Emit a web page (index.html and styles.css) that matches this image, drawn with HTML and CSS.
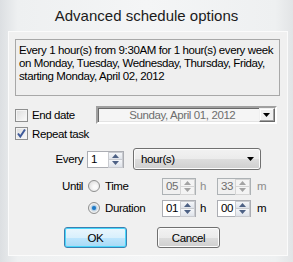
FILE: index.html
```html
<!DOCTYPE html>
<html lang="en">
<head>
    <meta charset="UTF-8">
    <title>Advanced schedule options</title>
    <link rel="stylesheet" href="styles.css">
</head>
<body>
    <div class="window">
        <h1 class="title">Advanced schedule options</h1>

        <div class="panel">
            <div class="summary">
                Every 1 hour(s) from 9:30AM for 1 hour(s) every week<br>
                on Monday, Tuesday, Wednesday, Thursday, Friday,<br>
                starting Monday, April 02, 2012
            </div>

            <!-- End date -->
            <div class="row row-end">
                <span class="check"></span>
                <span class="check-label">End date</span>
                <div class="datebox">
                    <span class="date-text">Sunday, April 01, 2012</span>
                    <span class="date-btn">
                        <svg width="7" height="4" viewBox="0 0 7 4"><path d="M0 0h7L3.5 4z" fill="#000"/></svg>
                    </span>
                </div>
            </div>

            <!-- Repeat task -->
            <div class="row row-repeat">
                <span class="check checked">
                    <svg width="11" height="11" viewBox="0 0 11 11"><path d="M2 5.5l2.3 3L9 1.5" fill="none" stroke="#3e5a9a" stroke-width="2"/></svg>
                </span>
                <span class="check-label">Repeat task</span>
            </div>

            <div class="row row-every">
                <span class="field-label">Every</span>
                <div class="spin spin-every">
                    <span class="spin-val">1</span>
                    <span class="spin-btns">
                        <span class="spin-btn"><svg width="7" height="4" viewBox="0 0 7 4"><path d="M3.5 0L7 4H0z"/></svg></span>
                        <span class="spin-btn"><svg width="7" height="4" viewBox="0 0 7 4"><path d="M0 0h7L3.5 4z"/></svg></span>
                    </span>
                </div>
                <div class="combo">
                    <span>hour(s)</span>
                    <svg width="7" height="4" viewBox="0 0 7 4"><path d="M0 0h7L3.5 4z" fill="#000"/></svg>
                </div>
            </div>

            <div class="row row-until">
                <span class="field-label">Until</span>
                <span class="radio"></span>
                <span class="radio-label">Time</span>
                <div class="spin spin-small disabled">
                    <span class="spin-val">05</span>
                    <span class="spin-btns">
                        <span class="spin-btn"><svg width="7" height="4" viewBox="0 0 7 4"><path d="M3.5 0L7 4H0z"/></svg></span>
                        <span class="spin-btn"><svg width="7" height="4" viewBox="0 0 7 4"><path d="M0 0h7L3.5 4z"/></svg></span>
                    </span>
                </div>
                <span class="unit disabled-text">h</span>
                <div class="spin spin-small disabled">
                    <span class="spin-val">33</span>
                    <span class="spin-btns">
                        <span class="spin-btn"><svg width="7" height="4" viewBox="0 0 7 4"><path d="M3.5 0L7 4H0z"/></svg></span>
                        <span class="spin-btn"><svg width="7" height="4" viewBox="0 0 7 4"><path d="M0 0h7L3.5 4z"/></svg></span>
                    </span>
                </div>
                <span class="unit unit-m disabled-text">m</span>
            </div>

            <div class="row row-duration">
                <span class="field-label"></span>
                <span class="radio selected"></span>
                <span class="radio-label">Duration</span>
                <div class="spin spin-small">
                    <span class="spin-val">01</span>
                    <span class="spin-btns">
                        <span class="spin-btn"><svg width="7" height="4" viewBox="0 0 7 4"><path d="M3.5 0L7 4H0z"/></svg></span>
                        <span class="spin-btn"><svg width="7" height="4" viewBox="0 0 7 4"><path d="M0 0h7L3.5 4z"/></svg></span>
                    </span>
                </div>
                <span class="unit">h</span>
                <div class="spin spin-small">
                    <span class="spin-val">00</span>
                    <span class="spin-btns">
                        <span class="spin-btn"><svg width="7" height="4" viewBox="0 0 7 4"><path d="M3.5 0L7 4H0z"/></svg></span>
                        <span class="spin-btn"><svg width="7" height="4" viewBox="0 0 7 4"><path d="M0 0h7L3.5 4z"/></svg></span>
                    </span>
                </div>
                <span class="unit unit-m">m</span>
            </div>

            <div class="buttons">
                <button class="btn btn-default">OK</button>
                <button class="btn">Cancel</button>
            </div>
        </div>
    </div>
</body>
</html>
```

FILE: styles.css
```css
body {
    margin: 0;
    width: 293px;
    height: 262px;
    overflow: hidden;
    background: linear-gradient(90deg, #dcdfe2 0%, #eef0f1 6%, #f4f5f6 50%, #eef0f1 94%, #e2e4e6 100%);
    font-family: "Liberation Sans", Arial, sans-serif;
    font-size: 11.5px;
    letter-spacing: -0.4px;
    color: #000;
}

.window {
    padding-top: 1px;
}

.title {
    margin: 0;
    height: 30px;
    line-height: 30px;
    text-align: center;
    font-size: 15px;
    font-weight: normal;
    letter-spacing: 0;
    color: #1b1b1b;
}

/* Zone client de la fenetre */
.panel {
    margin-left: 8px;
    width: 278px;
    height: 215px;
    padding-bottom: 8px;
    border: 1px solid #fbfbfb;
    background: #f0f0f0;
}

.summary {
    margin: 7px 0 0 6px;
    width: 258px;
    height: 48px;
    padding: 4px 2px 3px 3px;
    border: 1px solid #a8a8a8;
    background: #efefef;
    line-height: 13px;
    white-space: nowrap;
}

.row {
    display: flex;
    align-items: center;
}

/* Cases a cocher */
.row-end {
    margin-top: 10px;
    height: 18px;
}

.row-repeat {
    margin-top: 3px;
    height: 13px;
}

.check {
    display: flex;
    align-items: center;
    justify-content: center;
    box-sizing: border-box;
    width: 13px;
    height: 13px;
    margin-left: 6px;
    border: 1px solid #8e8f8f;
    background: linear-gradient(135deg, #dcdcdc, #fbfbfb);
    box-shadow: inset 0 0 0 1px #f4f4f4;
}

.check-label {
    margin-left: 4px;
}

.datebox {
    display: flex;
    align-items: center;
    box-sizing: border-box;
    width: 181px;
    height: 18px;
    margin-left: 21px;
    border-style: solid;
    border-width: 2px;
    border-color: #a0a0a0 #fff #fff #a0a0a0;
    box-shadow: inset 1px 1px 0 #696969, inset -1px -1px 0 #e3e3e3;
    background: #f5f5f5;
}

.date-text {
    flex: 1;
    text-align: center;
    color: #6d6d6d;
    padding-left: 8px;
}

.date-btn {
    display: flex;
    align-items: center;
    justify-content: center;
    box-sizing: border-box;
    width: 16px;
    height: 14px;
    border-style: solid;
    border-width: 1px;
    border-color: #f0f0f0 #696969 #696969 #f0f0f0;
    background: #f0f0f0;
    box-shadow: inset -1px -1px 0 #a0a0a0, inset 1px 1px 0 #fff;
}

/* Zone de repetition */
.field-label {
    width: 74px;
    text-align: right;
}

.row-every {
    margin-top: 8px;
    height: 22px;
}

.row-until {
    margin-top: 8px;
    height: 16px;
}

.row-duration {
    margin-top: 6px;
    height: 16px;
}

.spin {
    display: flex;
    box-sizing: border-box;
    height: 17px;
    border: 1px solid #abadb3;
    background: #fff;
}

.spin-every {
    width: 37px;
    margin-left: 4px;
}

.spin-small {
    width: 34px;
}

.spin-val {
    flex: 1;
    padding-left: 3px;
    line-height: 15px;
}

.spin-btns {
    display: flex;
    flex-direction: column;
    width: 15px;
}

.spin-btn {
    flex: 1;
    display: flex;
    align-items: center;
    justify-content: center;
    border: 1px solid #c9cbd0;
    margin: 0 0 -1px 0;
    background: linear-gradient(#f5f7fa, #dfe3ea);
    fill: #4d6185;
}

.disabled {
    border-color: #adb2b5;
    background: #f0f0f0;
    color: #6d6d6d;
}

.disabled .spin-btn {
    border-color: #d5d5d5;
    background: #f4f4f4;
    fill: #a3a3a3;
}

.disabled-text {
    color: #8d8d8d;
}

.combo {
    display: flex;
    align-items: center;
    justify-content: space-between;
    box-sizing: border-box;
    width: 128px;
    height: 22px;
    margin-left: 9px;
    padding: 0 6px 0 7px;
    border: 1px solid #707070;
    border-radius: 3px;
    background: linear-gradient(#f2f2f2 0%, #ebebeb 50%, #dddddd 51%, #cfcfcf 100%);
    box-shadow: inset 0 0 0 1px #fcfcfc;
}

/* Boutons radio */
.radio {
    box-sizing: border-box;
    width: 12px;
    height: 12px;
    margin-left: 5px;
    border: 1px solid #8e8f8f;
    border-radius: 50%;
    background: radial-gradient(circle at 60% 60%, #fafafa 20%, #d4d4d4 100%);
}

.radio.selected {
    background: radial-gradient(circle, #1a70b8 0%, #2b85cf 25%, #b5ccdf 35%, #f0f0f0 60%, #d8d8d8 100%);
}

.radio-label {
    width: 57px;
    margin-left: 5px;
}

.unit {
    width: 21px;
    padding-left: 4px;
    box-sizing: border-box;
}

.unit-m {
    padding-left: 6px;
}

/* Boutons OK / Annuler */
.buttons {
    display: flex;
    gap: 30px;
    margin: 11px 0 0 55px;
}

.btn {
    width: 63px;
    height: 21px;
    padding: 0;
    border: 1px solid #707070;
    border-radius: 3px;
    background: linear-gradient(#f2f2f2 0%, #ebebeb 50%, #dddddd 51%, #cfcfcf 100%);
    box-shadow: inset 0 0 0 1px #fcfcfc;
    font-family: inherit;
    font-size: inherit;
    letter-spacing: inherit;
    color: #000;
}

.btn-default {
    border-color: #3c7fb1;
    background: linear-gradient(#eaf6fd 0%, #d9f0fc 50%, #bee6fd 51%, #a7d9f5 100%);
    box-shadow: inset 0 0 0 1px #48d7fb;
}
```
